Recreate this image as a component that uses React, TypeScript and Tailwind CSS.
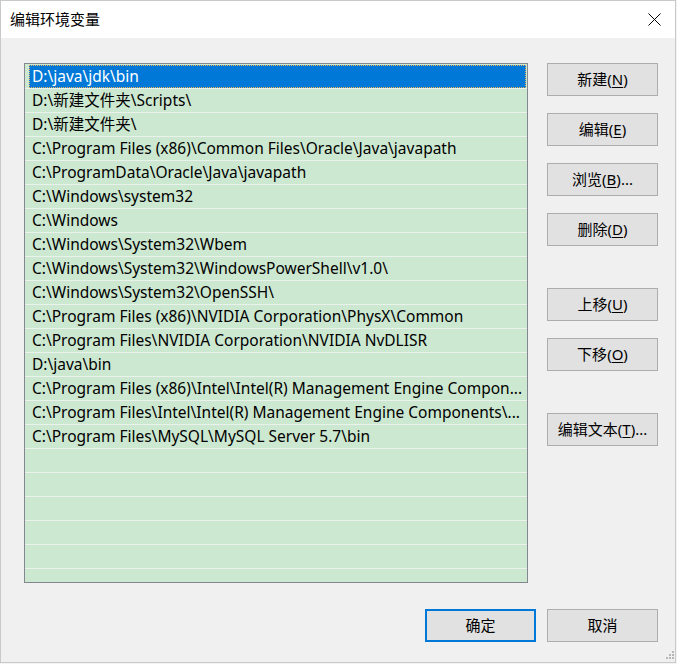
import React from "react";

const items = [
  "D:\\java\\jdk\\bin",
  "D:\\新建文件夹\\Scripts\\",
  "D:\\新建文件夹\\",
  "C:\\Program Files (x86)\\Common Files\\Oracle\\Java\\javapath",
  "C:\\ProgramData\\Oracle\\Java\\javapath",
  "C:\\Windows\\system32",
  "C:\\Windows",
  "C:\\Windows\\System32\\Wbem",
  "C:\\Windows\\System32\\WindowsPowerShell\\v1.0\\",
  "C:\\Windows\\System32\\OpenSSH\\",
  "C:\\Program Files (x86)\\NVIDIA Corporation\\PhysX\\Common",
  "C:\\Program Files\\NVIDIA Corporation\\NVIDIA NvDLISR",
  "D:\\java\\bin",
  "C:\\Program Files (x86)\\Intel\\Intel(R) Management Engine Compon...",
  "C:\\Program Files\\Intel\\Intel(R) Management Engine Components\\...",
  "C:\\Program Files\\MySQL\\MySQL Server 5.7\\bin",
  "",
  "",
  "",
  "",
  "",
  "",
];

const font = { fontFamily: '"Noto Sans", "Noto Sans CJK SC", sans-serif' };

function Btn({ label, mn, tail, mt }: { label: string; mn: string; tail?: string; mt: string }) {
  return (
    <div
      className={`${mt} w-[111px] h-[33px] bg-[#e1e1e1] border border-[#adadad] flex items-center justify-center text-[15px] text-black leading-none`}
    >
      <span>
        {label}(<span className="underline underline-offset-2">{mn}</span>){tail}
      </span>
    </div>
  );
}

export default function App() {
  return (
    <div className="w-[677px] h-[664px] bg-[#f3f3f3] overflow-hidden" style={font}>
      <div className="w-[676px] h-[663px] border border-[#c9c9c9] bg-[#f0f0f0] flex flex-col">
        {/* Title bar */}
        <div className="h-[37px] bg-white flex items-center justify-between pl-[9px] pr-[14px] shrink-0">
          <span className="text-[15px] text-black" style={{ fontFamily: '"Noto Sans CJK SC", sans-serif' }}>
            编辑环境变量
          </span>
          <svg width="13" height="13" viewBox="0 0 13 13">
            <path d="M0.5 0.5 L12.5 12.5 M12.5 0.5 L0.5 12.5" stroke="#000" strokeWidth="1" fill="none" />
          </svg>
        </div>

        {/* Body */}
        <div className="flex pl-[23px] pt-[25px]">
          <div className="w-[504px] h-[520px] border border-[#828790] bg-[#cde8d0] pt-[1px] overflow-hidden">
            {items.map((t, i) => (
              <div key={i} className="h-[24px] border-b border-[#eaf3eb] flex items-stretch">
                {i === 0 ? (
                  <div className="ml-[4px] mr-[1px] flex-1 bg-[#0078d7] outline outline-1 outline-dotted outline-[#e8b060] -outline-offset-1 flex items-center pl-[3px] pt-[1px] text-white text-[15.5px] whitespace-nowrap">
                    {t}
                  </div>
                ) : (
                  <div className="pl-[7px] pt-[1px] flex items-center text-black text-[15.5px] whitespace-nowrap">{t}</div>
                )}
              </div>
            ))}
          </div>

          <div className="flex flex-col ml-[19px]">
            <Btn label="新建" mn="N" mt="mt-0" />
            <Btn label="编辑" mn="E" mt="mt-[17px]" />
            <Btn label="浏览" mn="B" tail="..." mt="mt-[17px]" />
            <Btn label="删除" mn="D" mt="mt-[17px]" />
            <Btn label="上移" mn="U" mt="mt-[42px]" />
            <Btn label="下移" mn="O" mt="mt-[17px]" />
            <Btn label="编辑文本" mn="T" tail="..." mt="mt-[42px]" />
          </div>
        </div>

        {/* Bottom buttons */}
        <div className="flex justify-end gap-[11px] pr-[17px] mt-[26px] relative flex-1">
          <div className="w-[111px] h-[33px] bg-[#e1e1e1] border-2 border-[#0078d7] flex items-center justify-center text-[15px] text-black">
            确定
          </div>
          <div className="w-[111px] h-[33px] bg-[#e1e1e1] border border-[#adadad] flex items-center justify-center text-[15px] text-black">
            取消
          </div>
          <svg width="11" height="11" viewBox="0 0 11 11" className="absolute right-0 bottom-0">
            <rect x="8" y="0" width="2" height="2" fill="#b8b8b8" />
            <rect x="5" y="3" width="2" height="2" fill="#b8b8b8" />
            <rect x="8" y="3" width="2" height="2" fill="#b8b8b8" />
            <rect x="2" y="6" width="2" height="2" fill="#b8b8b8" />
            <rect x="5" y="6" width="2" height="2" fill="#b8b8b8" />
            <rect x="8" y="6" width="2" height="2" fill="#b8b8b8" />
          </svg>
        </div>
      </div>
    </div>
  );
}
